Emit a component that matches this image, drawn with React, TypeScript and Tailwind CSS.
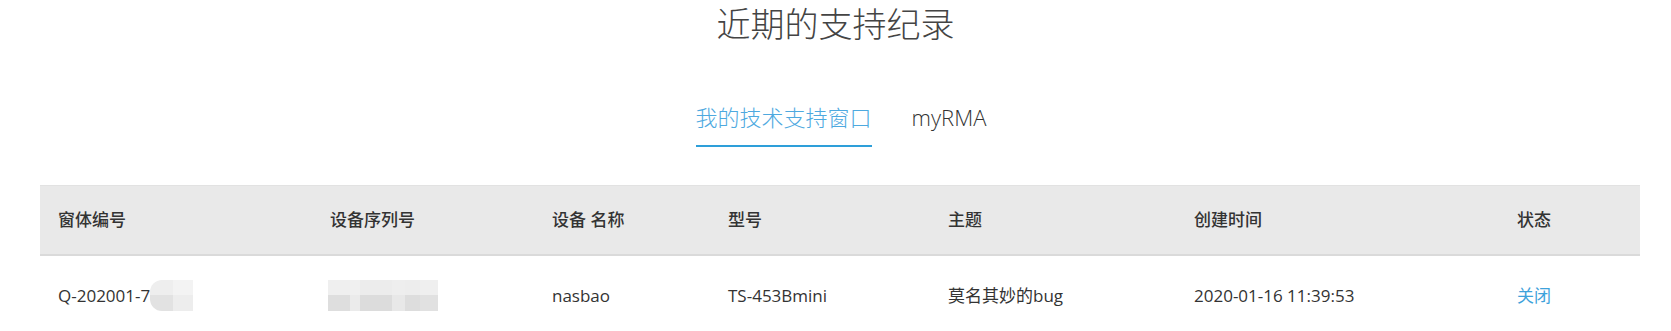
import React from "react";

const columns = ["窗体编号", "设备序列号", "设备 名称", "型号", "主题", "创建时间", "状态"];

type Cell = { w: number; top: string; bottom: string };

const Mosaic = ({ cells, className = "" }: { cells: Cell[]; className?: string }) => {
  return (
    <div className={`flex h-[31px] overflow-hidden ${className}`}>
      {cells.map((c, i) => (
        <div key={i} className="flex flex-col" style={{ width: c.w }}>
          <div className="h-[15px]" style={{ backgroundColor: c.top }} />
          <div className="h-[16px]" style={{ backgroundColor: c.bottom }} />
        </div>
      ))}
    </div>
  );
};

const ticketMask: Cell[] = [
  { w: 23, top: "#eeeeee", bottom: "#e2e2e2" },
  { w: 20, top: "#f3f3f3", bottom: "#ededed" },
];

const serialMask: Cell[] = [
  { w: 22, top: "#efefef", bottom: "#dedede" },
  { w: 10, top: "#f0f0f0", bottom: "#ebebeb" },
  { w: 32, top: "#ececec", bottom: "#dcdcdc" },
  { w: 13, top: "#eeeeee", bottom: "#e8e8e8" },
  { w: 15, top: "#ededed", bottom: "#dddddd" },
  { w: 18, top: "#efefef", bottom: "#e1e1e1" },
];

export default function App() {
  return (
    <div className="h-[331px] w-[1671px] overflow-hidden bg-white font-['Open_Sans','Noto_Sans_CJK_SC',sans-serif] text-[#333]">
      <h1 className="pt-[2px] text-center text-[34px] font-extralight leading-[44px] text-[#444]">
        近期的支持纪录
      </h1>

      <div className="mt-[56px] flex justify-center gap-[40px] pl-[11px] text-[22px] font-light leading-[30px]">
        <div className="border-b-2 border-[#2e9fd9] pb-[13px] text-[#4ea9df]">
          我的技术支持窗口
        </div>
        <div className="text-[#333]">myRMA</div>
      </div>

      <div className="ml-[40px] mt-[38px] w-[1600px]">
        <div className="grid h-[71px] grid-cols-[272px_222px_176px_220px_246px_323px_141px] items-center border-t border-b-2 border-t-[#e2e2e2] border-b-[#dadada] bg-[#e9e9e9] text-[17px] font-medium">
          {columns.map((c) => (
            <div key={c} className="pl-[18px] text-[#333]">
              {c}
            </div>
          ))}
        </div>

        <div className="grid grid-cols-[272px_222px_176px_220px_246px_323px_141px] items-center pt-[24px] text-[17px] leading-[24px] text-[#333]">
          <div className="flex items-center pl-[18px]">
            <span>Q-202001-7</span>
            <Mosaic cells={ticketMask} className="rounded-l-[12px]" />
          </div>
          <div className="pl-[16px]">
            <Mosaic cells={serialMask} />
          </div>
          <div className="pl-[18px]">nasbao</div>
          <div className="pl-[18px]">TS-453Bmini</div>
          <div className="pl-[18px]">莫名其妙的bug</div>
          <div className="pl-[18px]">2020-01-16 11:39:53</div>
          <div className="pl-[18px] text-[#3ea2db]">关闭</div>
        </div>
      </div>
    </div>
  );
}
